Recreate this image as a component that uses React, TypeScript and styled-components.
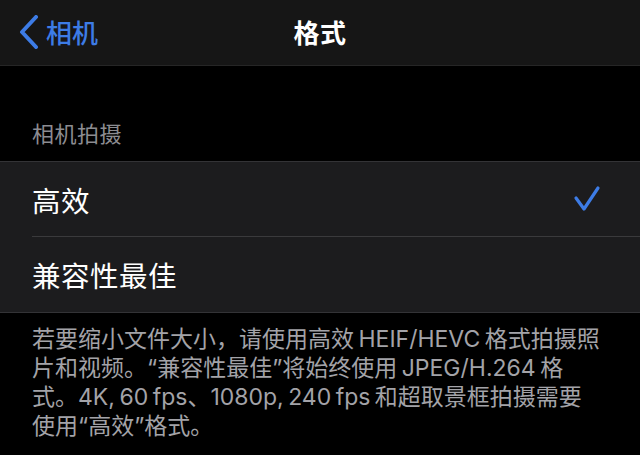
import styled, { createGlobalStyle } from "styled-components";

const GlobalStyle = createGlobalStyle`
  html, body {
    margin: 0;
    padding: 0;
    background: #000000;
  }
  body {
    font-family: Inter, "Noto Sans CJK SC", sans-serif;
    -webkit-font-smoothing: antialiased;
  }
`;

const Screen = styled.div`
  width: 640px;
  height: 455px;
  background: #000000;
  overflow: hidden;
  display: flex;
  flex-direction: column;
`;

const NavBar = styled.div`
  height: 66px;
  flex-shrink: 0;
  background: #161616;
  border-bottom: 1px solid #262626;
  box-sizing: border-box;
  display: grid;
  grid-template-columns: 1fr auto 1fr;
  align-items: center;
  padding: 0 18px 2px;
`;

const BackButton = styled.div`
  display: flex;
  align-items: center;
  gap: 6px;
  color: #3d7ce6;
  font-size: 26px;
  font-weight: 500;
`;

const NavTitle = styled.div`
  color: #ffffff;
  font-size: 26px;
  font-weight: 600;
  letter-spacing: 0.5px;
`;

const SectionLabel = styled.div`
  color: #8c8c91;
  font-size: 22px;
  letter-spacing: 0.5px;
  padding: 53px 32px 12px;
  line-height: 30px;
`;

const Group = styled.div`
  background: #1c1c1e;
  border-top: 1px solid #333336;
  border-bottom: 1px solid #333336;
`;

const Row = styled.div<{ $last?: boolean }>`
  height: 75px;
  margin-left: 32px;
  padding-right: 38px;
  display: flex;
  align-items: center;
  justify-content: space-between;
  color: #ffffff;
  font-size: 28.5px;
  letter-spacing: 0.5px;
  border-bottom: ${(p) => (p.$last ? "none" : "1px solid #3a3a3c")};
  box-sizing: border-box;
`;

const Footer = styled.div`
  color: #a3a3a8;
  font-size: 23px;
  line-height: 29px;
  letter-spacing: 0;
  word-spacing: -2px;
  padding: 12px 32px 0;
`;

const Chevron = () => (
  <svg width="22" height="34" viewBox="0 0 22 34" fill="none">
    <polyline
      points="18,2 4,17 18,32"
      stroke="#3d7ce6"
      strokeWidth="4"
      strokeLinecap="round"
      strokeLinejoin="round"
    />
  </svg>
);

const Check = () => (
  <svg width="30" height="30" viewBox="0 0 30 30" fill="none">
    <polyline
      points="4,14 12,25 26,4"
      stroke="#3d7ce6"
      strokeWidth="3.2"
      strokeLinecap="round"
      strokeLinejoin="round"
    />
  </svg>
);

const App = () => {
  return (
    <>
      <GlobalStyle />
      <Screen>
        <NavBar>
          <BackButton>
            <Chevron />
            相机
          </BackButton>
          <NavTitle>格式</NavTitle>
          <div />
        </NavBar>
        <SectionLabel>相机拍摄</SectionLabel>
        <Group>
          <Row>
            高效
            <Check />
          </Row>
          <Row $last>兼容性最佳</Row>
        </Group>
        <Footer>
          若要缩小文件大小，请使用高效 HEIF/HEVC 格式拍摄照
          <br />
          片和视频。“兼容性最佳”将始终使用 JPEG/H.264 格
          <br />
          式。4K, 60 fps、1080p, 240 fps 和超取景框拍摄需要
          <br />
          使用“高效”格式。
        </Footer>
      </Screen>
    </>
  );
};

export default App;
